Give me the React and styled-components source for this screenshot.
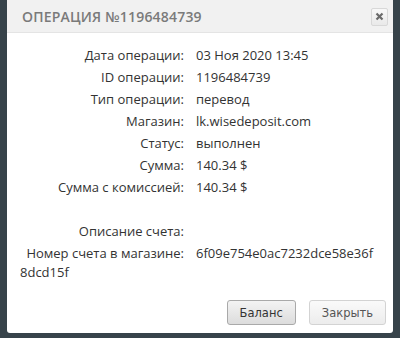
import React from "react";
import styled, { createGlobalStyle } from "styled-components";

const Global = createGlobalStyle`
  html, body { margin: 0; padding: 0; background: #37434a; }
  body { width: 400px; height: 338px; overflow: hidden; }
`;

const Dialog = styled.div`
  margin-left: 7px;
  width: 386px;
  height: 333px;
  background: #fff;
  display: flex;
  flex-direction: column;
  border-radius: 0 0 3px 3px;
`;

const Header = styled.div`
  height: 33px;
  background: #f1f1f1;
  border-bottom: 1px solid #e4e4e4;
  display: flex;
  align-items: center;
  justify-content: space-between;
  padding: 0 5px 0 15px;
  box-sizing: border-box;
`;

const Title = styled.div`
  font-family: "Open Sans", sans-serif;
  font-weight: 600;
  font-size: 14px;
  letter-spacing: 0.2px;
  color: #7a7a7a;
`;

const CloseBtn = styled.button`
  width: 17px;
  height: 18px;
  border: 1px solid #d8d8d8;
  border-radius: 2px;
  background: linear-gradient(#f8f8f8, #e9e9e9);
  display: flex;
  align-items: center;
  justify-content: center;
  padding: 0;
  margin-top: 1px;
`;

const Body = styled.div`
  flex: 1;
  padding: 13px 14px 0 13px;
  font-family: "Open Sans", sans-serif;
  font-size: 13px;
  color: #333;
`;

const Row = styled.div`
  line-height: 19px;
  padding-bottom: 3px;
  word-break: break-all;
  min-height: 19px;
`;

const Label = styled.span`
  display: inline-block;
  width: 164px;
  text-align: right;
  margin-right: 12px;
  word-break: normal;
`;

const Footer = styled.div`
  display: flex;
  justify-content: flex-end;
  gap: 13px;
  padding: 0 7px 8px 0;
`;

const Button = styled.button`
  height: 25px;
  padding: 0 12px;
  font-family: "DejaVu Sans", sans-serif;
  font-size: 11.5px;
  color: ${(p) => (p.$primary ? "#333" : "#555")};
  border: 1px solid ${(p) => (p.$primary ? "#a9a9a9" : "#d3d3d3")};
  border-radius: 3px;
  background: ${(p) =>
    p.$primary
      ? "linear-gradient(#f3f3f3, #dcdcdc)"
      : "linear-gradient(#fafafa, #ececec)"};
`;

const rows = [
  ["Дата операции:", "03 Ноя 2020 13:45"],
  ["ID операции:", "1196484739"],
  ["Тип операции:", "перевод"],
  ["Магазин:", "lk.wisedeposit.com"],
  ["Статус:", "выполнен"],
  ["Сумма:", "140.34 $"],
  ["Сумма с комиссией:", "140.34 $"],
  ["", ""],
  ["Описание счета:", ""],
  ["Номер счета в магазине:", "6f09e754e0ac7232dce58e36f8dcd15f"],
];

export default function App() {
  return (
    <>
      <Global />
      <Dialog>
        <Header>
          <Title>ОПЕРАЦИЯ №1196484739</Title>
          <CloseBtn aria-label="close">
            <svg width="9" height="9" viewBox="0 0 9 9">
              <path d="M1.5 1.5 L7.5 7.5 M7.5 1.5 L1.5 7.5" stroke="#6a6a6a" strokeWidth="2.2" />
            </svg>
          </CloseBtn>
        </Header>
        <Body>
          {rows.map(([l, v], i) => (
            <Row key={i}>
              {l && <Label>{l}</Label>}
              {v}
            </Row>
          ))}
        </Body>
        <Footer>
          <Button $primary>Баланс</Button>
          <Button>Закрыть</Button>
        </Footer>
      </Dialog>
    </>
  );
}
